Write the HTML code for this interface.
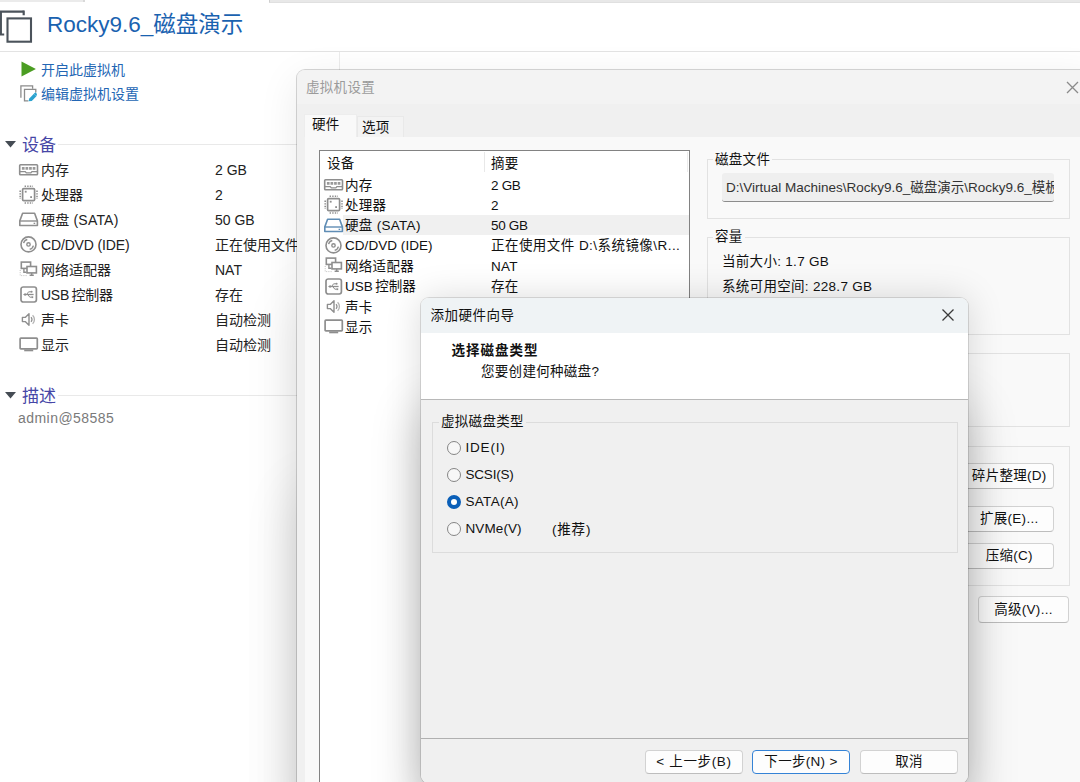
<!DOCTYPE html>
<html lang="zh-CN">
<head>
<meta charset="utf-8">
<title>Rocky9.6_磁盘演示</title>
<style>
html,body{margin:0;padding:0;}
body{width:1080px;height:782px;overflow:hidden;position:relative;background:#fff;
  font-family:"Liberation Sans","Noto Sans CJK SC",sans-serif;font-size:14px;color:#1a1a1a;}
.a{position:absolute;}
.t{position:absolute;white-space:nowrap;line-height:20px;height:20px;}
svg{position:absolute;overflow:visible;}

/* ---------- main window (left) ---------- */
#topstrip{left:0;top:0;width:1080px;height:3px;background:#e9e9e9;}
#title{left:47px;top:8.5px;font-size:22.5px;line-height:32px;height:32px;color:#1a62b0;}
#hline{left:0;top:51px;width:1080px;height:1px;background:#e3e3e3;}
#vline{left:339px;top:52px;width:1px;height:20px;background:#ececec;}
.lnk{color:#2366b4;font-size:14px;}
.sec{color:#4646a6;font-size:17px;line-height:24px;height:24px;}
.secline{height:1px;background:#e9e9e9;}
.dev{font-size:14px;color:#222;}
.desc{font-size:14px;color:#7a7a7a;letter-spacing:.45px;}

/* ---------- settings dialog ---------- */
#dlg{left:297px;top:70px;width:800px;height:730px;background:#f0f0f0;border-radius:8px;
  box-shadow:0 0 0 1px rgba(0,0,0,.16), 0 10px 40px 0 rgba(0,0,0,.085), 0 230px 56px 0 rgba(0,0,0,.10), 0 420px 56px 0 rgba(0,0,0,.11);}
#dlgtabs{left:297px;top:70px;width:800px;height:34px;background:#f3f3f3;border-radius:8px 0 0 0;}
#dlgpanel{left:305px;top:137px;width:800px;height:660px;background:#f9f9f9;}
#tab1{left:304px;top:114px;width:53px;height:23px;background:#f9f9f9;border:1px solid #ededed;border-bottom:none;box-sizing:border-box;}
#tab2{left:357px;top:116px;width:47px;height:21px;background:#f3f3f3;border:1px solid #e9e9e9;border-bottom:none;box-sizing:border-box;}
#list{left:319px;top:150px;width:371px;height:660px;background:#fff;border:1px solid #828282;box-sizing:border-box;}
#listsel{left:343px;top:215px;width:346px;height:20px;background:#f0f0f0;}
.li{font-size:13.5px;color:#111;letter-spacing:.3px;}
.grp{border:1px solid #e2e2e2;box-sizing:border-box;background:transparent;}
.gl{font-size:13.5px;color:#111;background:#f9f9f9;padding:0 2px;letter-spacing:.3px;}
.btn{background:#fdfdfd;border:1px solid #d2d2d2;border-bottom-color:#bdbdbd;border-radius:4px;box-sizing:border-box;
  font-size:13.5px;color:#111;text-align:center;letter-spacing:.3px;}

/* ---------- wizard ---------- */
#wz{left:421px;top:298px;width:547px;height:485px;background:#f0f0f0;border-radius:8px;overflow:hidden;}
#wzshadow{left:421px;top:298px;width:547px;height:485px;border-radius:8px;
  box-shadow:0 0 0 1px rgba(0,0,0,.12), 0 0 36px 0 rgba(0,0,0,.15), 0 110px 50px 0 rgba(0,0,0,.23);}
#wztitle{left:0;top:0;width:547px;height:35px;background:#eff3f5;}
#wzhead{left:0;top:35px;width:547px;height:66px;background:#fff;border-bottom:1px solid #b8b8b8;}
#wzfootline{left:0;top:440px;width:547px;height:1px;background:#b0b0b0;}
.radio{width:14px;height:14px;border-radius:50%;border:1px solid #858585;background:#f7f7f7;box-sizing:border-box;}
.radio.on{border:4.5px solid #0a5fb8;background:#fff;}
</style>
</head>
<body>

<!-- main window -->
<div class="a" style="left:0;top:0;width:83px;height:2px;background:#ebebeb"></div>
<div class="a" style="left:83px;top:0;width:2px;height:2px;background:#d9d9d9"></div>
<div class="a" style="left:269px;top:0;width:811px;height:2px;background:#e8e8e8;border-bottom:1px solid #e0e0e0;border-left:1px solid #cfcfcf"></div>
<div class="a" id="hline"></div>
<div class="a" id="vline"></div>

<svg id="icoTitle" style="left:0;top:0" width="40" height="48" viewBox="0 0 40 48">
  <path d="M0.8 34.4V11.7H23.7" fill="none" stroke="#4b535b" stroke-width="2.3"/>
  <path d="M23.7 10.55V15.3M0 34.5H4.2" fill="none" stroke="#4b535b" stroke-width="2.2"/>
  <rect x="7.5" y="18.4" width="23.5" height="23.3" fill="#fff" stroke="#4b535b" stroke-width="2.1"/>
</svg>
<div class="t" id="title">Rocky9.6_磁盘演示</div>

<svg style="left:21px;top:61.3px" width="16" height="16" viewBox="0 0 16 16"><path d="M0.5 0.4L14.9 8L0.5 15.6Z" fill="#4b9d22"/></svg>
<div class="t lnk" id="lnk1" style="left:41px;top:60px">开启此虚拟机</div>
<svg style="left:20px;top:85px" width="18" height="18" viewBox="0 0 18 18">
  <path d="M0.9 12.8V0.9H12.6V3.8" fill="none" stroke="#8c8c8c" stroke-width="1.3"/>
  <path d="M8.2 15.9H4.5V4.4H15.8V7.6" fill="none" stroke="#8c8c8c" stroke-width="1.3"/>
  <path d="M8.4 16.2L9.3 13.4L13.9 8.8L16.4 11.3L11.8 15.9Z" fill="#2aa2cf"/>
  <path d="M13.9 8.8L15.4 7.3L17 8.9L16.4 11.3Z" fill="#2aa2cf"/>
</svg>
<div class="t lnk" id="lnk2" style="left:41px;top:84px">编辑虚拟机设置</div>

<svg style="left:5px;top:141px" width="11" height="7" viewBox="0 0 11 7"><path d="M0 0H11L5.5 6.5Z" fill="#454c54"/></svg>
<div class="t sec" id="sec1" style="left:22px;top:133.5px">设备</div>
<div class="a secline" style="left:58px;top:144px;width:239px"></div>

<svg style="left:5px;top:392px" width="11" height="7" viewBox="0 0 11 7"><path d="M0 0H11L5.5 6.5Z" fill="#454c54"/></svg>
<div class="t sec" id="sec2" style="left:22px;top:384.5px">描述</div>
<div class="a secline" style="left:58px;top:395px;width:239px"></div>
<div class="t desc" id="desc" style="left:18px;top:408px">admin@58585</div>

<!-- device rows left -->
<svg style="left:19px;top:160px" width="20" height="20" viewBox="0 0 20 20"><rect x="0.7" y="4.7" width="17.8" height="10" rx="0.8" fill="#fff" stroke="#8e8e8e" stroke-width="1.6"/>
<path d="M0.7 11.6H6.3L7.3 12.8H11.9L12.9 11.6H18.5" fill="none" stroke="#8e8e8e" stroke-width="1.3"/>
<path d="M2.9 6.9h2.7v2.9h-2.7zM6.5 6.9h2.7v2.9h-2.7zM10.1 6.9h2.7v2.9h-2.7zM13.7 6.9h2.7v2.9h-2.7z" fill="#8e8e8e" opacity=".9"/></svg>
<svg style="left:19px;top:185px" width="20" height="20" viewBox="0 0 20 20"><rect x="3.6" y="3.6" width="12" height="12" rx="1.2" fill="#fff" stroke="#8e8e8e" stroke-width="1.7"/>
<path d="M5.6 1.2H14M5.6 18H14" stroke="#8e8e8e" stroke-width="1.6" stroke-dasharray="1.4 1.2" fill="none"/>
<path d="M1.2 5.6V14M18 5.6V14" stroke="#8e8e8e" stroke-width="1.6" stroke-dasharray="1.4 1.2" fill="none"/>
<rect x="5.8" y="5.8" width="1.8" height="1.8" fill="#8e8e8e"/><rect x="11.2" y="11.2" width="1.8" height="1.8" fill="#8e8e8e"/></svg>
<svg style="left:19px;top:210px" width="20" height="20" viewBox="0 0 20 20"><path d="M3.6 3.3H15.6L18.4 10.9V15.5H0.8V10.9Z" fill="#fff" stroke="#8e8e8e" stroke-width="1.6" stroke-linejoin="round"/>
<path d="M0.8 11H18.4" stroke="#8e8e8e" stroke-width="1.4" fill="none"/>
<rect x="14.6" y="12.7" width="1.6" height="1.3" fill="#8e8e8e"/></svg>
<svg style="left:19px;top:235px" width="20" height="20" viewBox="0 0 20 20"><circle cx="9.5" cy="9.4" r="7.5" fill="#fff" stroke="#8e8e8e" stroke-width="1.6"/>
<circle cx="9.5" cy="9.4" r="1.7" fill="none" stroke="#8e8e8e" stroke-width="1.4"/>
<path d="M4.6 8.2A5 5 0 0 1 8.3 4.5" fill="none" stroke="#8e8e8e" stroke-width="1.4"/>
<path d="M14.4 10.6A5 5 0 0 1 10.7 14.3" fill="none" stroke="#8e8e8e" stroke-width="1.4"/></svg>
<svg style="left:19px;top:260px" width="20" height="20" viewBox="0 0 20 20"><rect x="2.3" y="2.1" width="9.3" height="6.3" fill="#fff" stroke="#8e8e8e" stroke-width="1.6"/>
<path d="M4.9 8.6V12.2H7.4" fill="none" stroke="#8e8e8e" stroke-width="1.4"/>
<rect x="8" y="6.5" width="9.4" height="6.4" fill="#fff" stroke="#8e8e8e" stroke-width="1.6"/>
<path d="M12.7 13V14.8M10.6 15.2H14.8" fill="none" stroke="#8e8e8e" stroke-width="1.4"/>
<path d="M1.2 10V15.6H8.5" fill="none" stroke="#8e8e8e" stroke-width="1" stroke-dasharray="1 1.2" opacity=".55"/></svg>
<svg style="left:19px;top:285px" width="20" height="20" viewBox="0 0 20 20"><rect x="2" y="2" width="15.4" height="15" rx="2.2" fill="#fff" stroke="#8e8e8e" stroke-width="1.7"/>
<path d="M5 9.5H14.6" stroke="#8e8e8e" stroke-width="1.3" fill="none"/>
<path d="M4 9.5L6.6 8V11Z" fill="#8e8e8e"/>
<path d="M7.6 9.5L9.6 6.8H12M8.8 9.5L10.8 12.2H12.6" stroke="#8e8e8e" stroke-width="1" fill="none"/>
<circle cx="12.6" cy="6.8" r="1" fill="#8e8e8e"/><rect x="12.4" y="11.3" width="1.8" height="1.8" fill="#8e8e8e"/></svg>
<svg style="left:19px;top:310px" width="20" height="20" viewBox="0 0 20 20"><path d="M3.4 7.4H6.2L10 3.8V15.2L6.2 11.6H3.4Z" fill="#fff" stroke="#8e8e8e" stroke-width="1.4" stroke-linejoin="round"/>
<path d="M12 7.2A3.2 3.2 0 0 1 12 11.8" fill="none" stroke="#8e8e8e" stroke-width="1.3"/>
<path d="M13.6 5.2A6 6 0 0 1 13.6 13.8" fill="none" stroke="#8e8e8e" stroke-width="1.3" opacity=".7"/></svg>
<svg style="left:19px;top:335px" width="20" height="20" viewBox="0 0 20 20"><rect x="1.1" y="3.2" width="17.2" height="10.6" rx="0.8" fill="#fff" stroke="#8e8e8e" stroke-width="1.7"/>
<path d="M5.2 15.4H14.2" stroke="#8e8e8e" stroke-width="1.8" fill="none"/></svg>
<div class="t dev" style="left:41px;top:160px">内存</div><div class="t dev" style="left:215px;top:160px">2 GB</div>
<div class="t dev" style="left:41px;top:185px">处理器</div><div class="t dev" style="left:215px;top:185px">2</div>
<div class="t dev" style="left:41px;top:210px;letter-spacing:.2px">硬盘 (SATA)</div><div class="t dev" style="left:215px;top:210px">50 GB</div>
<div class="t dev" style="left:41px;top:235px;letter-spacing:-.15px">CD/DVD (IDE)</div><div class="t dev" style="left:215px;top:235px">正在使用文件</div>
<div class="t dev" style="left:41px;top:260px">网络适配器</div><div class="t dev" style="left:215px;top:260px">NAT</div>
<div class="t dev" style="left:41px;top:285px;word-spacing:-1.2px;letter-spacing:-.25px">USB 控制器</div><div class="t dev" style="left:215px;top:285px">存在</div>
<div class="t dev" style="left:41px;top:310px">声卡</div><div class="t dev" style="left:215px;top:310px">自动检测</div>
<div class="t dev" style="left:41px;top:335px">显示</div><div class="t dev" style="left:215px;top:335px">自动检测</div>

<!-- settings dialog -->
<div class="a" id="dlg"></div>
<div class="a" id="dlgtabs"></div>
<div class="a" id="dlgpanel"></div>
<div class="t" id="dlgtitle" style="left:306px;top:78px;font-size:13.5px;color:#9b9b9b;letter-spacing:.3px">虚拟机设置</div>
<svg style="left:1066px;top:80.5px" width="13" height="13" viewBox="0 0 13 13"><path d="M1 1L12 12M12 1L1 12" stroke="#8a8a8a" stroke-width="1.3" fill="none"/></svg>
<div class="a" id="tab1"></div><div class="a" id="tab2"></div>
<div class="t li" style="left:312px;top:115px">硬件</div>
<div class="t li" style="left:362px;top:117.5px">选项</div>

<div class="a" id="list"></div>
<div class="a" id="listsel"></div>
<div class="a" style="left:484px;top:152px;width:1px;height:20px;background:#e8e8e8"></div>
<div class="a" style="left:687px;top:152px;width:1px;height:20px;background:#ececec"></div>
<div class="t li" style="left:327px;top:154.2px">设备</div><div class="t li" style="left:491px;top:154.2px">摘要</div>
<div class="t li" style="left:345px;top:175.5px">内存</div><div class="t li" style="left:491px;top:175.5px;letter-spacing:-.3px;word-spacing:0">2 GB</div>
<div class="t li" style="left:345px;top:196px">处理器</div><div class="t li" style="left:491px;top:196px">2</div>
<div class="t li" style="left:345px;top:216.3px">硬盘 (SATA)</div><div class="t li" style="left:491px;top:216.3px;letter-spacing:-.3px;word-spacing:0">50 GB</div>
<div class="t li" style="left:345px;top:236.4px;letter-spacing:.05px">CD/DVD (IDE)</div><div class="t li" style="left:491px;top:236.4px;letter-spacing:.45px">正在使用文件 D:\系统镜像\R...</div>
<div class="t li" style="left:345px;top:257px">网络适配器</div><div class="t li" style="left:491px;top:257px">NAT</div>
<div class="t li" style="left:345px;top:277.3px;word-spacing:-1.2px;letter-spacing:0px">USB 控制器</div><div class="t li" style="left:491px;top:277.3px">存在</div>
<div class="t li" style="left:345px;top:297.9px">声卡</div>
<div class="t li" style="left:345px;top:318px">显示</div>

<svg style="left:324.2px;top:174.9px" width="20" height="20" viewBox="0 0 20 20"><rect x="0.7" y="4.7" width="17.8" height="10" rx="0.8" fill="#fff" stroke="#8e8e8e" stroke-width="1.6"/>
<path d="M0.7 11.6H6.3L7.3 12.8H11.9L12.9 11.6H18.5" fill="none" stroke="#8e8e8e" stroke-width="1.3"/>
<path d="M2.9 6.9h2.7v2.9h-2.7zM6.5 6.9h2.7v2.9h-2.7zM10.1 6.9h2.7v2.9h-2.7zM13.7 6.9h2.7v2.9h-2.7z" fill="#8e8e8e" opacity=".9"/></svg>
<svg style="left:324.2px;top:195.4px" width="20" height="20" viewBox="0 0 20 20"><rect x="3.6" y="3.6" width="12" height="12" rx="1.2" fill="#fff" stroke="#8e8e8e" stroke-width="1.7"/>
<path d="M5.6 1.2H14M5.6 18H14" stroke="#8e8e8e" stroke-width="1.6" stroke-dasharray="1.4 1.2" fill="none"/>
<path d="M1.2 5.6V14M18 5.6V14" stroke="#8e8e8e" stroke-width="1.6" stroke-dasharray="1.4 1.2" fill="none"/>
<rect x="5.8" y="5.8" width="1.8" height="1.8" fill="#8e8e8e"/><rect x="11.2" y="11.2" width="1.8" height="1.8" fill="#8e8e8e"/></svg>
<svg style="left:324.2px;top:215.7px" width="20" height="20" viewBox="0 0 20 20"><path d="M3.6 3.3H15.6L18.4 10.9V15.5H0.8V10.9Z" fill="#fff" stroke="#5f8db5" stroke-width="1.6" stroke-linejoin="round"/>
<path d="M0.8 11H18.4" stroke="#5f8db5" stroke-width="1.4" fill="none"/>
<rect x="14.6" y="12.7" width="1.6" height="1.3" fill="#5f8db5"/></svg>
<svg style="left:324.2px;top:235.8px" width="20" height="20" viewBox="0 0 20 20"><circle cx="9.5" cy="9.4" r="7.5" fill="#fff" stroke="#8e8e8e" stroke-width="1.6"/>
<circle cx="9.5" cy="9.4" r="1.7" fill="none" stroke="#8e8e8e" stroke-width="1.4"/>
<path d="M4.6 8.2A5 5 0 0 1 8.3 4.5" fill="none" stroke="#8e8e8e" stroke-width="1.4"/>
<path d="M14.4 10.6A5 5 0 0 1 10.7 14.3" fill="none" stroke="#8e8e8e" stroke-width="1.4"/></svg>
<svg style="left:324.2px;top:256.4px" width="20" height="20" viewBox="0 0 20 20"><rect x="2.3" y="2.1" width="9.3" height="6.3" fill="#fff" stroke="#8e8e8e" stroke-width="1.6"/>
<path d="M4.9 8.6V12.2H7.4" fill="none" stroke="#8e8e8e" stroke-width="1.4"/>
<rect x="8" y="6.5" width="9.4" height="6.4" fill="#fff" stroke="#8e8e8e" stroke-width="1.6"/>
<path d="M12.7 13V14.8M10.6 15.2H14.8" fill="none" stroke="#8e8e8e" stroke-width="1.4"/>
<path d="M1.2 10V15.6H8.5" fill="none" stroke="#8e8e8e" stroke-width="1" stroke-dasharray="1 1.2" opacity=".55"/></svg>
<svg style="left:324.2px;top:276.7px" width="20" height="20" viewBox="0 0 20 20"><rect x="2" y="2" width="15.4" height="15" rx="2.2" fill="#fff" stroke="#8e8e8e" stroke-width="1.7"/>
<path d="M5 9.5H14.6" stroke="#8e8e8e" stroke-width="1.3" fill="none"/>
<path d="M4 9.5L6.6 8V11Z" fill="#8e8e8e"/>
<path d="M7.6 9.5L9.6 6.8H12M8.8 9.5L10.8 12.2H12.6" stroke="#8e8e8e" stroke-width="1" fill="none"/>
<circle cx="12.6" cy="6.8" r="1" fill="#8e8e8e"/><rect x="12.4" y="11.3" width="1.8" height="1.8" fill="#8e8e8e"/></svg>
<svg style="left:324.2px;top:297.3px" width="20" height="20" viewBox="0 0 20 20"><path d="M3.4 7.4H6.2L10 3.8V15.2L6.2 11.6H3.4Z" fill="#fff" stroke="#8e8e8e" stroke-width="1.4" stroke-linejoin="round"/>
<path d="M12 7.2A3.2 3.2 0 0 1 12 11.8" fill="none" stroke="#8e8e8e" stroke-width="1.3"/>
<path d="M13.6 5.2A6 6 0 0 1 13.6 13.8" fill="none" stroke="#8e8e8e" stroke-width="1.3" opacity=".7"/></svg>
<svg style="left:324.2px;top:317.4px" width="20" height="20" viewBox="0 0 20 20"><rect x="1.1" y="3.2" width="17.2" height="10.6" rx="0.8" fill="#fff" stroke="#8e8e8e" stroke-width="1.7"/>
<path d="M5.2 15.4H14.2" stroke="#8e8e8e" stroke-width="1.8" fill="none"/></svg>
<!-- right groups -->
<div class="a grp" style="left:707px;top:159px;width:362.5px;height:60px"></div>
<div class="t gl" style="left:713px;top:149.6px">磁盘文件</div>
<div class="a" style="left:722px;top:173px;width:332px;height:29px;background:#efefef;border-bottom:1px solid #8c8c8c;border-radius:3px;box-sizing:border-box"></div>
<div class="t li" style="left:726px;top:177.5px;letter-spacing:0;width:328px;overflow:hidden;color:#333">D:\Virtual Machines\Rocky9.6_磁盘演示\Rocky9.6_模板</div>

<div class="a grp" style="left:707px;top:237px;width:362.5px;height:97.5px"></div>
<div class="t gl" style="left:713px;top:227px">容量</div>
<div class="t li" style="left:722px;top:252px">当前大小: 1.7 GB</div>
<div class="t li" style="left:722px;top:277px">系统可用空间: 228.7 GB</div>

<div class="a grp" style="left:707px;top:353px;width:362.5px;height:73.5px"></div>
<div class="a grp" style="left:707px;top:445.5px;width:362.5px;height:140px"></div>

<div class="a btn" style="left:940px;top:462.5px;width:113.5px;height:26px;line-height:24px;padding-left:25px">碎片整理(D)</div>
<div class="a btn" style="left:940px;top:505.5px;width:113.5px;height:26px;line-height:24px;padding-left:25px">扩展(E)...</div>
<div class="a btn" style="left:940px;top:542.5px;width:113.5px;height:26px;line-height:24px;padding-left:25px">压缩(C)</div>
<div class="a btn" style="left:978px;top:596px;width:91px;height:27px;line-height:25px">高级(V)...</div>

<!-- wizard -->
<div class="a" id="wzshadow"></div>
<div class="a" id="wz">
  <div class="a" id="wztitle"></div>
  <div class="a" id="wzhead"></div>
  <div class="t li" style="left:9.5px;top:7.5px;letter-spacing:.5px">添加硬件向导</div>
  <svg style="left:521.4px;top:11px" width="12" height="12" viewBox="0 0 12 12"><path d="M0.5 0.5L11.5 11.5M11.5 0.5L0.5 11.5" stroke="#3a3a3a" stroke-width="1.25" fill="none"/></svg>
  <div class="t li" style="left:30.5px;top:43px;font-weight:bold;letter-spacing:1px">选择磁盘类型</div>
  <div class="t li" style="left:60px;top:64px">您要创建何种磁盘?</div>

  <div class="a grp" style="left:11px;top:123.6px;width:526px;height:131px;border-color:#dcdcdc"></div>
  <div class="t gl" style="left:18px;top:114px;background:#f0f0f0">虚拟磁盘类型</div>

  <div class="a radio" style="left:26.3px;top:143.2px"></div><div class="t li" style="left:44.5px;top:140px;letter-spacing:.8px">IDE(I)</div>
  <div class="a radio" style="left:26.3px;top:170.2px"></div><div class="t li" style="left:44.5px;top:167px;letter-spacing:-.2px">SCSI(S)</div>
  <div class="a radio on" style="left:26.3px;top:197.2px"></div><div class="t li" style="left:44.5px;top:194px">SATA(A)</div>
  <div class="a radio" style="left:26.3px;top:224.2px"></div><div class="t li" style="left:44.5px;top:221px;letter-spacing:.1px">NVMe(V)</div>
  <div class="t li" style="left:131px;top:221.5px;letter-spacing:.8px">(推荐)</div>

  <div class="a" id="wzfootline"></div>
  <div class="a btn" style="left:224px;top:452px;width:98px;height:24px;line-height:22px;letter-spacing:.65px">&lt; 上一步(B)</div>
  <div class="a btn" style="left:331px;top:452px;width:98px;height:24px;line-height:22px;border-color:#3583d6">下一步(N) &gt;</div>
  <div class="a btn" style="left:439px;top:452px;width:98px;height:24px;line-height:22px">取消</div>
</div>

</body>
</html>
